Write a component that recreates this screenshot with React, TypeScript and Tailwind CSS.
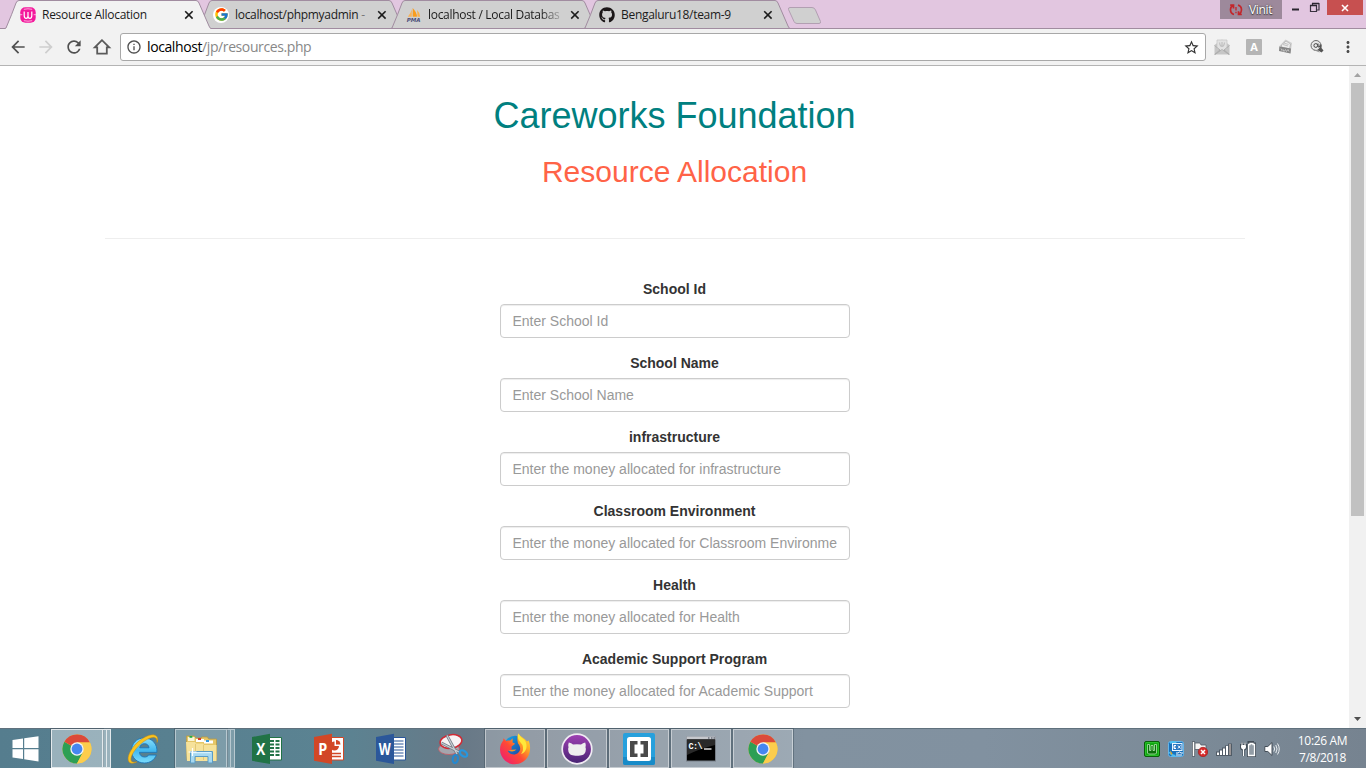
import type { ReactNode } from "react";
import { FcGoogle } from "react-icons/fc";
import { FaGithub } from "react-icons/fa";
import {
  MdArrowBack,
  MdArrowForward,
  MdInfoOutline,
  MdMoreVert,
  MdRefresh,
  MdStarBorder,
} from "react-icons/md";

/* ---------- browser tabs ---------- */

function WampIcon() {
  return (
    <svg width="16" height="16" viewBox="0 0 16 16">
      <rect x="0.300" y="0.300" width="15.400" height="15.400" rx="5" fill="#f4189c" />
      <path d="M3.800 2.300Q8 1.300 12.200 2.300M3.800 13.700Q8 14.700 12.200 13.700M0 7.700h2.300M13.700 7.700H16" stroke="#fbd0ea" strokeWidth=".8" fill="none" />
      <path d="M4.200 4.500v4q0 2.800 1.900 2.800T8 9q0 2.300 1.900 2.300t1.900-2.800V4.500M8 5v4" stroke="#fff" strokeWidth="1.200" fill="none" />
    </svg>
  );
}

function PmaIcon() {
  return (
    <svg width="18" height="16" viewBox="0 0 18 16">
      <path d="M6.500 1.500V10H2Q5.500 6 6.500 1.500z" fill="#f7b25a" />
      <path d="M7.500 0Q12.500 5 12.300 10H7.500z" fill="#f89c1e" />
      <path d="M12.500 2.500Q16 6 16 10h-3z" fill="#fab04a" />
      <text x="0.800" y="15.600" fontSize="6.200" fontWeight="bold" fontStyle="italic" fontFamily="DejaVu Sans, sans-serif" fill="#4b4f7a" textLength="15.500">PMA</text>
    </svg>
  );
}

function CloseX() {
  return (
    <svg width="10" height="10" viewBox="0 0 10 10">
      <path d="M1.200 1.200l7.400 7.400M8.600 1.200L1.200 8.600" stroke="#1c1c1c" strokeWidth="1.600" fill="none" />
    </svg>
  );
}

function Tab({ icon, active, children }: { icon: ReactNode; active?: boolean; children: ReactNode }) {
  return (
    <div className={active ? "relative z-10 h-[29px] w-[206px] shrink-0" : "relative -ml-[13px] h-[29px] w-[206px] shrink-0"}>
      <svg className="absolute inset-0" width="206" height="29" viewBox="0 0 206 29">
        <path d="M0 28.500L1 28Q7 14 11 3Q12 .5 14 .5H191Q193 .5 194 3L204 26Q205 28.500 206 28.500V29H0z" fill={active ? "#f2f2f2" : "#d0d0d0"} />
        <path d="M0 28.500L1 28Q7 14 11 3Q12 .5 14 .5H191Q193 .5 194 3L204 26Q205 28.500 206 28.500" fill="none" stroke="#a18ca0" />
        {!active && <path d="M0 28.500H206" stroke="#a18ca0" />}
      </svg>
      <div className="relative flex h-[29px] items-center pl-[15px]">
        <span className="flex w-4 shrink-0 justify-center">{icon}</span>
        <span className="ml-1.5 w-[134px] whitespace-nowrap text-[12px] leading-4 text-[#1b1b1b]">{children}</span>
        <span className="ml-[8px]"><CloseX /></span>
      </div>
    </div>
  );
}

function WindowControls() {
  return (
    <div className="flex h-[28px] items-start">
      <div className="flex h-[19px] w-[62px] items-center bg-[#9d899b] pl-[9px]">
        <svg width="14" height="12" viewBox="0 0 14 12">
          <path d="M5 10.500Q1.500 9.500 1.500 5.500Q1.600 3 3.500 1.500M1.200 1.200h3.300v3.200M9 1.200Q12.500 2 12.500 6Q12.300 8.500 10.500 10M12.800 10.500H9.500V7.300" stroke="#c3262b" strokeWidth="1.700" fill="none" />
          <path d="M7 3v3.500M7 7.800v1.400" stroke="#c3262b" strokeWidth="1.300" />
        </svg>
        <span className="ml-[6px] text-[12px] leading-4 tracking-[-0.35px] text-white [text-shadow:0_0_2px_#333,0_1px_1px_#444]">Vinit</span>
      </div>
      <svg width="45" height="16" viewBox="0 0 45 16">
        <path d="M10 9.500h7" stroke="#2b2630" strokeWidth="2" />
        <path d="M30.500 5.500V3.500H37v6.500h-2M28.500 5.500h6v6h-6z" stroke="#3a3340" strokeWidth="1.200" fill="none" />
        <path d="M28 5.500h7M30 3.500h7" stroke="#2b2630" strokeWidth="1.500" />
      </svg>
      <div className="flex h-[15px] w-[36px] items-center justify-center bg-[#c75050]">
        <svg width="8" height="8" viewBox="0 0 8 8"><path d="M1 1l6 6M7 1L1 7" stroke="#fff" strokeWidth="1.600" /></svg>
      </div>
      <div className="w-[3px]" />
    </div>
  );
}

function TabStrip() {
  return (
    <div className="flex h-[29px] shrink-0 border-b border-[#a18ca0] bg-[#e2c6e0] pl-[5px]">
      <Tab active icon={<WampIcon />}><span className="tracking-[-0.28px]">Resource Allocation</span></Tab>
      <Tab icon={<span className="flex size-4 shrink-0 items-center justify-center rounded-full bg-white"><FcGoogle size={15} /></span>}>
        <span className="tracking-[-0.3px]">localhost/phpmyadmin <span className="text-[#777]">-</span></span>
      </Tab>
      <Tab icon={<PmaIcon />}>
        <span className="block tracking-[-0.3px] [mask-image:linear-gradient(to_right,#000_112px,transparent_138px)]">localhost / Local Databas</span>
      </Tab>
      <Tab icon={<FaGithub size={16} color="#1b1718" />}><span className="tracking-[-0.3px]">Bengaluru18/team-9</span></Tab>
      <svg className="-ml-[3px] mt-[6px]" width="36" height="19" viewBox="0 0 36 19">
        <path d="M3 1.500H25Q27.500 1.500 28.500 4L33.500 15.500Q34 17.500 32 17.500H10Q8 17.500 7 15.500L1.500 3.500Q1 1.500 3 1.500z" fill="#d0d0d0" stroke="#b29fb2" />
      </svg>
      <div className="ml-auto"><WindowControls /></div>
    </div>
  );
}

/* ---------- toolbar ---------- */

function Toolbar() {
  return (
    <div className="flex h-[37px] shrink-0 items-center border-b border-[#b4b4b4] bg-[#f2f2f2]">
      <div className="flex w-[120px] items-center gap-2 pl-2 text-[#505050]">
        <MdArrowBack size={20} />
        <MdArrowForward size={20} color="#cecece" />
        <MdRefresh size={20} />
        <svg width="20" height="20" viewBox="0 0 20 20">
          <path d="M10 3.200L2.800 10.300H5.200V16.600H14.800V10.300H17.200z" fill="none" stroke="#5a5a5a" strokeWidth="1.800" />
        </svg>
      </div>
      <div className="flex h-[28px] w-[1086px] items-center rounded-[3px] border border-[#a8a8a8] bg-white pl-[5px] pr-[5px]">
        <MdInfoOutline size={16} color="#505050" />
        <span className="ml-[5px] text-[14px] leading-5 tracking-[-0.4px] text-[#888]"><span className="text-black">localhost</span>/jp/resources.php</span>
        <MdStarBorder className="ml-auto" size={17} color="#333" />
      </div>
      <div className="flex grow items-center pl-2">
        <svg width="16" height="16" viewBox="0 0 16 16">
          <path d="M.5 6L8 .5 15.500 6v9.500H.5z" fill="#c6c6c6" />
          <path d="M3 1h10v9L8 12 3 10z" fill="#e2e2e2" stroke="#c4c4c4" strokeWidth=".7" />
          <path d="M8 3v4.500M5.500 3.500Q6 7.500 8 7.500T10.500 3.500" stroke="#c0c0c0" strokeWidth="1.200" fill="none" />
          <path d="M.5 6.500l5.500 4.500L.5 15.500M15.500 6.500L10 11l5.500 4.500M1 15.500l7-5 7 5" fill="none" stroke="#aaa" strokeWidth=".9" />
        </svg>
        <span className="ml-4 flex size-4 items-center justify-center rounded-[1px] bg-[#b5b5b5] text-[11px] font-bold leading-4 text-white">A</span>
        <svg className="ml-4" width="16" height="16" viewBox="0 0 16 16">
          <path d="M1 7.500L7.500.5 14 4l-1.500 10.500L1 11z" fill="#cfcfcf" />
          <path d="M3.500 6L8 2l4.500 3-1 5-8-2z" fill="#ececec" stroke="#aaa" strokeWidth=".6" />
          <path d="M5 5.500l5 1.500M6 4l4.500 1.500" stroke="#b0b0b0" strokeWidth=".7" />
          <path d="M1.500 7.500L13 9.500l-.5 5L1 12z" fill="#858585" />
          <path d="M3 9.500l1 2 1-1 1 2 1.500-2 1 2 1.500-2 1 2" stroke="#d8d8d8" strokeWidth=".7" fill="none" />
        </svg>
        <svg className="ml-[15px]" width="16" height="16" viewBox="0 0 16 16">
          <circle cx="7" cy="6.500" r="5" fill="#e8e8e8" stroke="#6a6a6a" />
          <circle cx="6.800" cy="6.500" r="1.900" fill="none" stroke="#444" />
          <path d="M9 4.500v3q1 1.500 2-.5" stroke="#444" fill="none" />
          <path d="M10.500 5.500h2v3.500L14.500 11.500l-2 2-4-2.500 2-2z" fill="#555" />
          <path d="M4.500 10.500l6 2.500" stroke="#999" />
        </svg>
        <MdMoreVert className="ml-[14px]" size={18} color="#4a4a4a" />
      </div>
    </div>
  );
}

/* ---------- page ---------- */

const fields = [
  { label: "School Id", placeholder: "Enter School Id" },
  { label: "School Name", placeholder: "Enter School Name" },
  { label: "infrastructure", placeholder: "Enter the money allocated for infrastructure" },
  { label: "Classroom Environment", placeholder: "Enter the money allocated for Classroom Environment" },
  { label: "Health", placeholder: "Enter the money allocated for Health" },
  { label: "Academic Support Program", placeholder: "Enter the money allocated for Academic Support" },
];

function Page() {
  return (
    <main className="flex min-h-0 grow bg-white">
      <div className="flex grow flex-col items-center overflow-hidden pt-[30px] font-['Liberation_Sans',Arial,sans-serif] text-[#333]">
        <h1 className="text-[36px] leading-[40px] text-[teal]">Careworks Foundation</h1>
        <h2 className="mt-[19px] text-[30px] leading-[33px] text-[tomato]">Resource Allocation</h2>
        <hr className="mt-[50px] w-[1140px] shrink-0 border-t border-[#eee]" />
        <form className="mt-10 flex w-[350px] flex-col gap-[15px]">
          {fields.map((f) => (
            <label key={f.label} className="flex flex-col gap-[5px] text-center text-[14px] font-bold leading-5">
              {f.label}
              <input
                placeholder={f.placeholder}
                className="h-[34px] w-full rounded-[4px] border border-[#ccc] bg-white px-3 text-[14px] font-normal leading-5 shadow-[inset_0_1px_1px_rgba(0,0,0,0.075)] placeholder:text-[#999]"
              />
            </label>
          ))}
        </form>
      </div>
      <div className="flex w-[17px] shrink-0 flex-col items-center bg-[#f1f1f1]">
        <svg width="17" height="17" viewBox="0 0 17 17"><path d="M5 11h7L8.500 7z" fill="#a3a3a3" /></svg>
        <div className="h-[433px] w-[13px] bg-[#c1c1c1]" />
        <svg className="mt-auto" width="17" height="17" viewBox="0 0 17 17"><path d="M5 6h7L8.500 10z" fill="#505050" /></svg>
      </div>
    </main>
  );
}

/* ---------- taskbar ---------- */

function ChromeIcon() {
  return (
    <svg width="30" height="30" viewBox="0 0 30 30">
      <circle cx="15" cy="15" r="14.500" fill="#fcc934" />
      <path d="M15 15L2.440 7.750A14.500 14.500 0 0 0 15 29.500L21 18.500z" fill="#2d9f55" />
      <path d="M15 15L2.440 7.750A14.500 14.500 0 0 1 27.900 8.400H15z" fill="#db4a3a" />
      <path d="M15 8.400h12.900A14.500 14.500 0 0 1 15 29.500L21 18z" fill="#fccd4d" />
      <circle cx="15" cy="15" r="6.700" fill="#f4f4f4" />
      <circle cx="15" cy="15" r="5.400" fill="#4587f0" />
    </svg>
  );
}

function IeIcon() {
  return (
    <svg width="32" height="32" viewBox="0 0 32 32">
      <defs>
        <linearGradient id="ie" x1="0" y1="0" x2="0" y2="1"><stop offset="0" stopColor="#8be0fb" /><stop offset=".5" stopColor="#42b8ef" /><stop offset="1" stopColor="#7bdcfc" /></linearGradient>
      </defs>
      <path fillRule="evenodd" d="M17 5C9.500 5 4.500 10.500 4.500 17.500S9.800 30 17.500 30C23 30 27.600 26.800 29.300 22H21.600C20.800 23.300 19.500 24 17.700 24 14.700 24 12.700 22.300 12.500 19.300H29.900C30.700 11 25.300 5 17 5zM12.700 14.800C13.200 12.200 15 10.700 17.500 10.700S21.700 12.200 22 14.800z" fill="url(#ie)" stroke="#1c75b8" strokeWidth=".9" />
      <path d="M30 9.500C31.500 5.500 30.500 2.400 27 1.900C22 1.200 13.500 5.500 7.500 12.500C1.500 19.500-.3 26.500 2.200 29.200C3.800 30.900 7 30.500 9.800 28.800C6.500 29.600 4.500 29.200 4 27.300C3.300 24.200 6.300 18.500 11.300 13.300C17 7.300 24 3.700 27.500 4.400C29.500 4.800 30.200 6.500 30 9.500z" fill="#fbc51e" stroke="#c98a12" strokeWidth=".5" />
    </svg>
  );
}

function ExplorerIcon() {
  return (
    <svg width="34" height="32" viewBox="0 0 34 32">
      <path d="M2.500 5.500V3h8l1 2h6V4h6l1 2h8V27H3z" fill="#e5c667" stroke="#b99a44" strokeWidth=".8" />
      <path d="M4 4h6.500v4H4z" fill="#faf5d5" /><path d="M5.500 3h2.800v1.800H5.500z" fill="#1fae45" />
      <path d="M12 6h8v3h-8z" fill="#fff" /><path d="M14 5h3v2h-3z" fill="#d8392b" />
      <path d="M20 7.500h9v3h-9z" fill="#fff" /><path d="M22 7h3v2h-3z" fill="#3599df" />
      <path d="M2 9h9l1 1.500h7l1 1.500h12.500V28H3z" fill="#f6e29a" />
      <path d="M11.500 11v16M19.500 12v15" stroke="#e2c877" />
      <path d="M6.500 30V18.500h22V30h-4.500v-6.500H11V30z" fill="#a6d8f1" stroke="#5b9cc5" />
      <path d="M8 19.700h19" stroke="#e5f7ff" />
      <path d="M8.500 15v8M4.500 19h8" stroke="#fff" strokeWidth="1.200" />
    </svg>
  );
}

function OfficeIcon({ kind }: { kind: "X" | "P" | "W" }) {
  const color = { X: "#217346", P: "#d24726", W: "#2b579a" }[kind];
  return (
    <svg width="32" height="32" viewBox="0 0 32 32">
      <path d="M17 4.500H30.500V27H17z" fill="#fff" stroke={color} />
      {kind === "X" && <path d="M19 8h4M24.500 8h4M19 11.500h4M24.500 11.500h4M19 15h4M24.500 15h4M19 18.500h4M24.500 18.500h4M19 22h4M24.500 22h4" stroke={color} strokeWidth="2.200" />}
      {kind === "W" && <path d="M18 8h10.500M18 11h10.500M18 14h10.500M18 17h10.500M18 20h10.500M18 23h10.500" stroke={color} strokeWidth="1.200" />}
      {kind === "P" && (
        <>
          <path d="M21.500 8.500a4.500 4.500 0 1 0 4.500 4.500h-4.500z" fill={color} />
          <path d="M23 7v4.500h4.500A4.500 4.500 0 0 0 23 7z" fill={color} />
          <path d="M18 20.500h10M18 23.500h10" stroke={color} strokeWidth="1.500" />
        </>
      )}
      <path d="M1 4L19 .8V31L1 27.800z" fill={color} />
      <text x="9.800" y="21.500" textAnchor="middle" fontSize="15.500" fontWeight="bold" fontFamily="Open Sans, sans-serif" fill="#fff" textLength={kind === "W" ? 12 : 9} lengthAdjust="spacingAndGlyphs">{kind}</text>
    </svg>
  );
}

function SnipIcon() {
  return (
    <svg width="32" height="32" viewBox="0 0 32 32">
      <ellipse cx="12" cy="16" rx="10.500" ry="5.500" fill="#a4a5ad" stroke="#c95862" strokeWidth=".8" />
      <ellipse cx="14" cy="8.500" rx="11" ry="6.700" fill="#f6f2f4" stroke="#d02b35" strokeWidth="1.500" transform="rotate(-10 14 8.500)" />
      <path d="M10 2.500L20 21M4.500 10L22 19" stroke="#777e88" strokeWidth="2.700" /><path d="M10 2.500L20 21M4.500 10L22 19" stroke="#c9d0d6" strokeWidth="1.200" />
      <ellipse cx="18.300" cy="26" rx="2.600" ry="4" fill="none" stroke="#2588cf" strokeWidth="2.200" transform="rotate(8 18.300 26)" />
      <ellipse cx="26.500" cy="20.500" rx="4.200" ry="2.600" fill="none" stroke="#2796df" strokeWidth="2.200" transform="rotate(35 26.500 20.500)" />
    </svg>
  );
}

function FirefoxIcon() {
  return (
    <svg width="32" height="32" viewBox="0 0 32 32">
      <defs>
        <linearGradient id="ff" x1="1" y1="0" x2="0" y2="1"><stop offset="0" stopColor="#fff13b" /><stop offset=".3" stopColor="#ffa523" /><stop offset=".55" stopColor="#ff4a35" /><stop offset="1" stopColor="#e9147d" /></linearGradient>
        <linearGradient id="ffb" x1="0" y1="0" x2="1" y2="1"><stop offset="0" stopColor="#15abe9" /><stop offset="1" stopColor="#233596" /></linearGradient>
      </defs>
      <circle cx="16" cy="13.500" r="10.800" fill="url(#ffb)" />
      <path d="M1 16.500C1 12 2.800 9 4.300 7.500V5.200L7.300 8C8.800 7.300 10 7.500 11.300 7.600L13.600 5.300V9.400L16.200 10.800 12.600 13.500V16.700L8.700 18C10.500 21.500 15.800 22.700 18.900 20 22.800 16.700 20.900 12.500 19 10.500 18 6.500 18.200 3.500 19.300.5 21.500 3.900 25.700 5.200 28 8.500L29.500 7.500C31.700 12 31.800 19 28.700 24 22.400 34 7.500 33.500 2.600 23Q1 20 1 16.500z" fill="url(#ff)" />
      <path d="M9.500 17.500Q14 20 17.500 16.500L13 16.800z" fill="#ff9326" />
      <path d="M19.300.5Q18 4 19.800 7.300L23.500 12Q25.300 17 22 21C27.500 19.500 29.500 12.500 25.500 7Q21 3.500 19.300.5z" fill="#ffe83b" />
    </svg>
  );
}

function GitHubDesktopIcon() {
  return (
    <svg width="32" height="32" viewBox="0 0 32 32">
      <defs><linearGradient id="gh" x1="0" y1="0" x2="0" y2="1"><stop offset="0" stopColor="#a041b4" /><stop offset="1" stopColor="#462372" /></linearGradient></defs>
      <circle cx="16" cy="16" r="14.800" fill="url(#gh)" stroke="#f0ebf3" strokeWidth="1.700" />
      <path d="M7.800 9.500Q10.500 9.800 12 11.500Q16 10.800 20 11.500Q22 9.800 24.200 9.500Q25.100 11.500 24.500 14.300Q25.500 16.500 24.500 18.800C23.500 22 20.500 22.800 16 22.800S8.500 22 7.500 18.800Q6.500 16.500 7.500 14.300Q6.900 11.500 7.800 9.500z" fill="#eee" />
    </svg>
  );
}

function BracketsIcon() {
  return (
    <svg width="32" height="32" viewBox="0 0 32 32">
      <rect width="32" height="32" rx="2" fill="#27a0dc" />
      <path d="M0 24h32v6q0 2-2 2H2q-2 0-2-2z" fill="#188bc8" />
      <rect x="4" y="4" width="24" height="24" rx="2.500" fill="#fff" />
      <path d="M7 8h7.500v3.500H11.500v9h3V24H7zM17.500 8H25v16h-7.500v-3.500h3v-9h-3z" fill="#494949" />
    </svg>
  );
}

function TerminalIcon() {
  return (
    <svg width="32" height="28" viewBox="0 0 32 28">
      <rect x="1" y="1.500" width="30" height="25" fill="#777e87" />
      <rect x="1.500" y="1.500" width="29" height="3" fill="#c6c8cd" />
      <path d="M23 3h1.500M26 3h1.500M28.500 3H30" stroke="#3c4654" />
      <rect x="2" y="4.500" width="28" height="21" fill="#000" />
      <path d="M2 4.500H30V10Q14 14 2 20z" fill="#292929" />
      <text x="3.500" y="13.500" fontFamily="Liberation Mono, monospace" fontSize="8.500" fontWeight="bold" fill="#fff" textLength="14">C:\</text>
      <path d="M19 14h7.500" stroke="#fff" strokeWidth="1.300" />
    </svg>
  );
}

function TaskButton({ children, open, stacked, focused }: { children: ReactNode; open?: boolean; stacked?: boolean; focused?: boolean }) {
  if (!open) return <div className="flex w-[62px] items-center justify-center">{children}</div>;
  const tone = focused ? "border-[#e3e9ec] bg-white/40" : "border-white/45 bg-white/22";
  return (
    <div className="flex w-[62px] px-px">
      <div className={"flex grow items-center justify-center border outline outline-[#42545f]/50 " + tone}>{children}</div>
      {stacked && <div className={"w-1 border-y border-r " + tone} />}
      {stacked && <div className={"w-1 border-y border-r " + tone} />}
    </div>
  );
}

function Tray() {
  return (
    <div className="ml-auto flex items-center gap-2">
      <svg width="16" height="16" viewBox="0 0 16 16">
        <rect x=".5" y=".5" width="15" height="15" rx="1.500" fill="#12a812" stroke="#0a5f0a" />
        <rect x="1.500" y="1.500" width="13" height="13" rx="1" fill="none" stroke="#36c936" strokeWidth=".7" />
        <path d="M3.500 3.500h2v6h1.500v-5h2v5h1.500v-6h2V12l-1 1h-7l-1-1z" fill="#0b6d0b" stroke="#c9efc5" strokeWidth=".7" />
      </svg>
      <svg width="16" height="16" viewBox="0 0 16 16">
        <rect x=".5" y=".5" width="15" height="15" rx="2" fill="#1872bd" stroke="#65b5e8" />
        <path d="M2 2q4-2 6 0M1.500 11q3 4.500 6 3.500" stroke="#4fc0f0" strokeWidth="2" fill="none" />
        <rect x="4.500" y="2.500" width="9.500" height="7" fill="#2d79c1" stroke="#e8f4fd" />
        <path d="M6 4.500v3M6 4.500h2M6 6h1.500M6 7.500h2M10 4.500l2.500 3M12.500 4.500l-2.500 3" stroke="#fff" />
        <path d="M2 9.500l2.500 3L3 14z" fill="#e9a21c" />
        <path d="M8 12h2l1.500-1 1.500 1h2M8 14h6" stroke="#fff" fill="none" />
      </svg>
      <svg width="16" height="16" viewBox="0 0 16 16">
        <path d="M1.500 .5v15" stroke="#444c55" strokeWidth="3" />
        <path d="M3 2h5l1 2h5v6H8L7 8.500H3z" fill="#f5f5f5" stroke="#515b64" strokeWidth=".8" />
        <path d="M1.500 1v14" stroke="#fff" strokeWidth="1.600" />
        <circle cx="11" cy="11" r="4.700" fill="#d72c2c" stroke="#a21b1b" strokeWidth=".7" />
        <path d="M9 9l4 4M13 9l-4 4" stroke="#fff" strokeWidth="1.500" />
      </svg>
      <svg width="16" height="16" viewBox="0 0 16 16">
        <path d="M0 10.500h3v-2h3v-2h3v-2h3v-2h4V15H0z" fill="#505b66" />
        <path d="M1 11.500h2V14H1zM4 9.500h2V14H4zM7 7.500h2V14H7zM10 5h2v9h-2z" fill="#fff" />
        <path d="M13 3h2v11h-2z" fill="#9a9595" />
      </svg>
      <svg width="16" height="16" viewBox="0 0 16 16">
        <path d="M7.500 3h1.500V1.500h3.500V3H15v11.500H8.500V3" fill="#75818d" stroke="#434d57" strokeWidth="3" />
        <path d="M8.500 3.500h1.500v-1h3v1h1.500v11h-6z" fill="#929ca5" stroke="#fff" strokeWidth="1.300" />
        <path d="M1 4h5v2.500Q6 8.500 3.500 8.500T1 6.500zM2 1.500V4M5 1.500V4M3.500 8v7" fill="#fff" stroke="#434d57" strokeWidth="2" />
        <path d="M1.500 4.500h4v2Q5.500 8 3.500 8T1.500 6.500zM2 1.500V4M5 1.500V4M3.500 8v7" fill="#fff" stroke="#fff" strokeWidth="1" />
      </svg>
      <svg width="16" height="16" viewBox="0 0 16 16">
        <path d="M.8 5.500h3L8 1.500v13L3.800 10.500h-3z" fill="#fff" stroke="#434d57" strokeWidth="1" />
        <path d="M9.800 5.500Q11.500 8 9.800 10.500M11.800 4Q14.300 8 11.800 12M13.500 2.500Q17 8 13.500 13.500" stroke="#e8ecef" strokeWidth="1" fill="none" />
      </svg>
      <div className="ml-[10px] mr-[19px] flex w-[49px] flex-col items-center whitespace-nowrap text-[12px] leading-[17px] tracking-[-0.35px] text-white">
        <span>10:26 AM</span>
        <span>7/8/2018</span>
      </div>
    </div>
  );
}

function Taskbar() {
  return (
    <footer className="flex h-10 shrink-0 border-t border-[#60717d] bg-[linear-gradient(90deg,#557d8e_0%,#5b8392_25%,#687987_34%,#75818e_39%,#8292a0_59%,#8191a0_72%,#7c8b98_86%,#768390_100%)]">
      <div className="flex w-[50px] items-center justify-center">
        <svg width="27" height="26" viewBox="0 0 27 26">
          <path d="M.5 4L11 2.500V12H.5zM12.200 2.300L26.500.2V12H12.200zM.5 13.200H11V23L.5 21.500zM12.200 13.200H26.500V25.500L12.200 23.300z" fill="#fff" />
        </svg>
      </div>
      <TaskButton open focused stacked><ChromeIcon /></TaskButton>
      <TaskButton><IeIcon /></TaskButton>
      <TaskButton open stacked><ExplorerIcon /></TaskButton>
      <TaskButton><OfficeIcon kind="X" /></TaskButton>
      <TaskButton><OfficeIcon kind="P" /></TaskButton>
      <TaskButton><OfficeIcon kind="W" /></TaskButton>
      <TaskButton><SnipIcon /></TaskButton>
      <TaskButton open><FirefoxIcon /></TaskButton>
      <TaskButton open><GitHubDesktopIcon /></TaskButton>
      <TaskButton open><BracketsIcon /></TaskButton>
      <TaskButton open><TerminalIcon /></TaskButton>
      <TaskButton open><ChromeIcon /></TaskButton>
      <Tray />
    </footer>
  );
}

export default function App() {
  return (
    <div className="flex h-[768px] w-[1366px] flex-col overflow-hidden font-['Open_Sans',sans-serif]">
      <TabStrip />
      <Toolbar />
      <Page />
      <Taskbar />
    </div>
  );
}
